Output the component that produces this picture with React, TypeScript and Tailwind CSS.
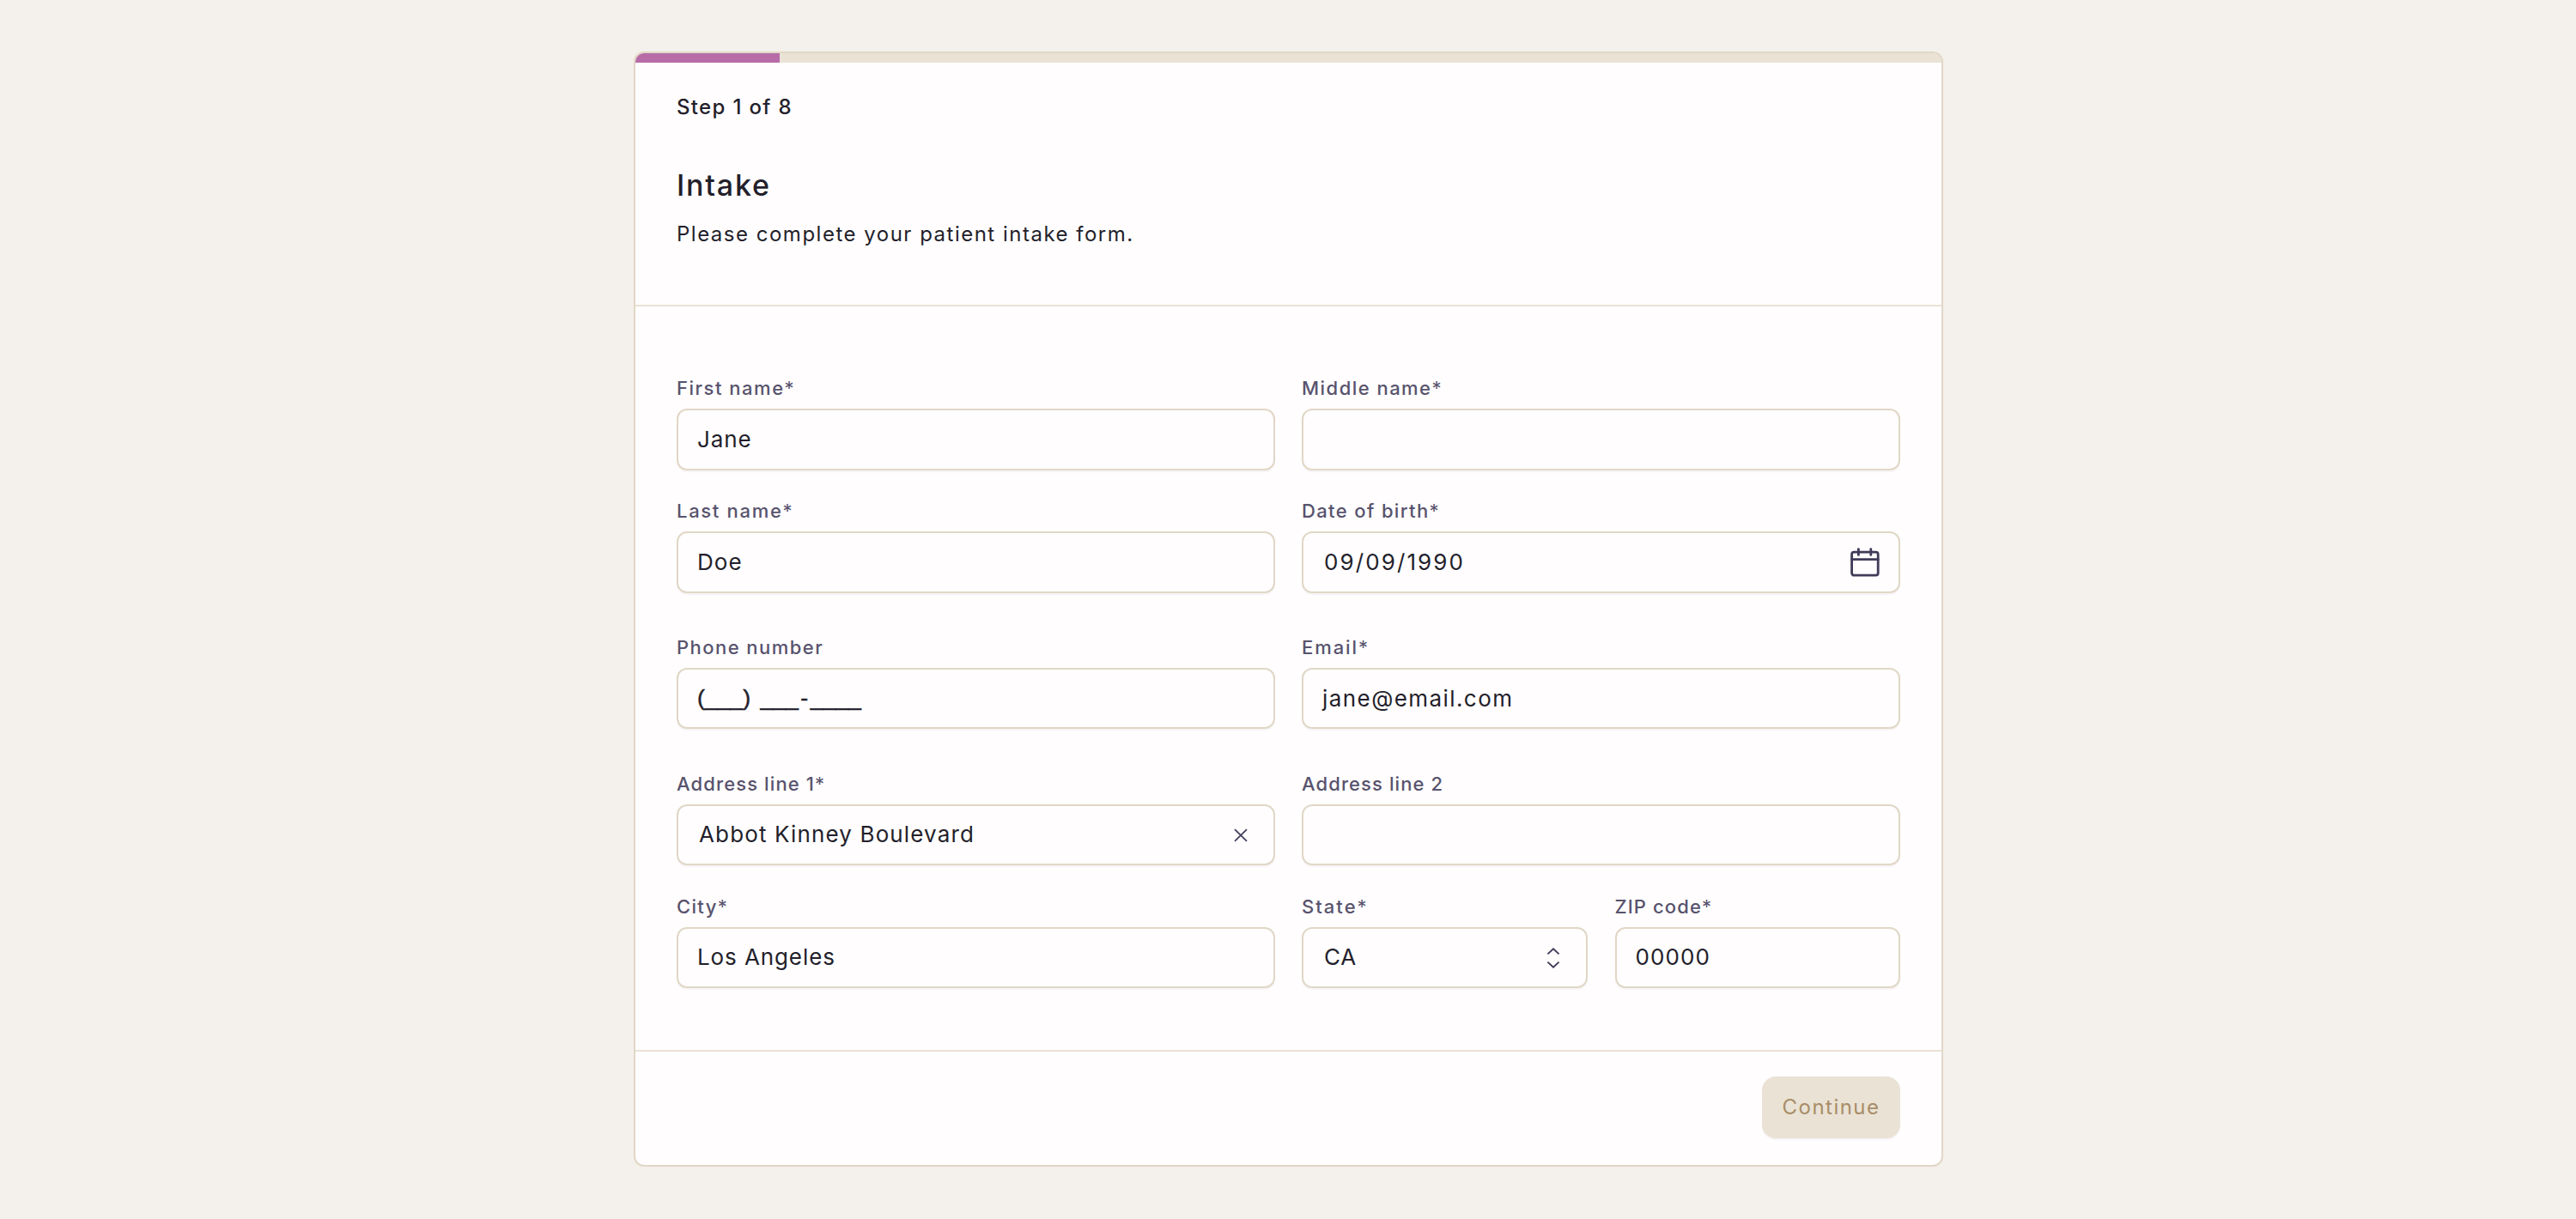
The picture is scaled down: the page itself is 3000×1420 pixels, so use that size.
import type { ReactNode } from "react";
import clsx from "clsx";

type FieldProps = {
  label: string;
  required?: boolean;
  labelClass: string;
  className?: string;
  boxClass?: string;
  children?: ReactNode;
};

function Field({ label, required, labelClass, className, boxClass, children }: FieldProps) {
  return (
    <div className={clsx("flex min-w-0 flex-col gap-2", className)}>
      <label className={clsx("h-8 whitespace-nowrap text-[22px]/8 font-medium text-[#58536d]", labelClass)}>
        {label}
        {required && <span className="font-normal">*</span>}
      </label>
      <div
        className={clsx(
          "flex items-center justify-between whitespace-nowrap rounded-[12px] border-2 border-[#e1d7c6] text-[26px]/8 text-[#231f2b] shadow-[0_2px_1px_rgba(35,31,43,0.04)]",
          boxClass,
        )}
      >
        {children}
      </div>
    </div>
  );
}

function CalendarIcon() {
  return (
    <svg className="h-[34px] w-[34px]" viewBox="0 0 34 34" fill="none" stroke="#403b59" strokeWidth="2.8" strokeLinecap="round">
      <rect x="1.6" y="5.2" width="30.6" height="27" rx="2.6" />
      <path d="M1.6 13.7H32.2M9.4 1.6V8.4M23.8 1.6V8.4" />
    </svg>
  );
}

function ClearIcon() {
  return (
    <svg className="h-[16px] w-[16px]" viewBox="0 0 16 16" fill="none" stroke="#403b59" strokeWidth="1.7">
      <path d="M1 1.2L15 14.8M15 1.2L1 14.8" />
    </svg>
  );
}

function SelectorIcon() {
  return (
    <svg className="h-[26px] w-[16px]" viewBox="0 0 16 26" fill="none" stroke="#403b59" strokeWidth="1.9">
      <path d="M1.4 8.4L8 2.2L14.6 8.4M1.4 17.6L8 23.8L14.6 17.6" />
    </svg>
  );
}

export default function App() {
  return (
    <div className="h-[1420px] w-[3000px] bg-[#f4f0eb] pl-[738px] pt-[60px] font-['Inter',sans-serif] text-[#231f2b]">
      <div className="flex h-[1299px] w-[1525px] flex-col overflow-hidden rounded-[12px] border-2 border-[#e1d7c6] bg-[#fffdfe]">
        <div className="flex h-[11px] shrink-0 bg-[#eae2d5]">
          <div className="w-[168px] bg-[#b76ca8]" />
        </div>

        <header className="flex h-[284px] shrink-0 flex-col border-b-2 border-[#eae2d5] px-12 pt-[36px]">
          <p className="text-[24px]/8 font-medium tracking-[1.34px]">Step 1 of 8</p>
          <h1 className="mt-[53px] text-[34px]/[44px] font-medium tracking-[1.8px]">Intake</h1>
          <p className="mt-[19px] text-[24px]/8 tracking-[1.5px]">Please complete your patient intake form.</p>
        </header>

        <main className="flex h-[868px] shrink-0 flex-col border-b-2 border-[#eae2d5] px-12 pt-[79px]">
          <div className="grid grid-cols-2 gap-x-[31px]">
            <Field label="First name" required labelClass="tracking-[1.52px]" boxClass="h-[72px] px-[22px]">
              <span className="tracking-[0.9px]">Jane</span>
            </Field>
            <Field label="Middle name" required labelClass="tracking-[1.47px]" boxClass="h-[72px]" />
          </div>

          <div className="mt-[31px] grid grid-cols-2 gap-x-[31px]">
            <Field label="Last name" required labelClass="tracking-[1.69px]" boxClass="h-[72px] px-[22px]">
              <span className="tracking-[1.1px]">Doe</span>
            </Field>
            <Field label="Date of birth" required labelClass="tracking-[1.37px]" boxClass="h-[72px] pl-[24px] pr-[22px]">
              <span className="tracking-[2.1px]">09/09/1990</span>
              <CalendarIcon />
            </Field>
          </div>

          <div className="mt-[47px] grid grid-cols-2 gap-x-[31px]">
            <Field label="Phone number" labelClass="tracking-[1.45px]" boxClass="h-[71px] px-[22px]">
              <span className="pb-[2px] font-['Liberation_Sans',sans-serif] text-[26.6px] [-webkit-text-stroke:0.5px_#231f2b] [word-spacing:4px]">
                (___) ___<span className="mx-[2.5px]">-</span>____
              </span>
            </Field>
            <Field label="Email" required labelClass="tracking-[1.94px]" boxClass="h-[71px] px-[22px]">
              <span className="tracking-[1.43px]">jane@email.com</span>
            </Field>
          </div>

          <div className="mt-[48px] grid grid-cols-2 gap-x-[31px]">
            <Field label="Address line 1" required labelClass="tracking-[1.11px]" boxClass="h-[71px] pl-[24px] pr-[30px]">
              <span className="pb-[2px] tracking-[1.14px]">Abbot Kinney Boulevard</span>
              <ClearIcon />
            </Field>
            <Field label="Address line 2" labelClass="tracking-[1.09px]" boxClass="h-[71px]" />
          </div>

          <div className="mt-[32px] grid grid-cols-2 gap-x-[31px]">
            <Field label="City" required labelClass="tracking-[1.34px]" boxClass="h-[71px] px-[22px]">
              <span className="pb-[2px] tracking-[0.9px]">Los Angeles</span>
            </Field>
            <div className="grid grid-cols-2 gap-x-[32px]">
              <Field label="State" required labelClass="tracking-[2.02px]" boxClass="h-[71px] pl-[24px] pr-[30px]">
                <span className="pb-[2px] tracking-[0.8px]">CA</span>
                <SelectorIcon />
              </Field>
              <Field label="ZIP code" required labelClass="tracking-[1.12px]" boxClass="h-[71px] px-[22px]">
                <span className="pb-[2px] tracking-[1.08px]">00000</span>
              </Field>
            </div>
          </div>
        </main>

        <footer className="flex justify-end px-12 pt-[29px]">
          <button className="flex h-[72px] w-[161px] items-center justify-center rounded-[16px] bg-[#eae2d5] text-[24px]/8 tracking-[1.47px] text-[#a88d68] shadow-[0_2px_1px_rgba(35,31,43,0.04)]">
            Continue
          </button>
        </footer>
      </div>
    </div>
  );
}
